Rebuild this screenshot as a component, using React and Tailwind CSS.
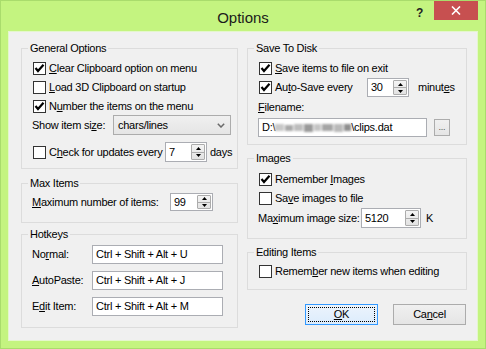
import React from "react";

function CheckBox({ checked }) {
  return (
    <span className="flex h-[13px] w-[13px] shrink-0 items-center justify-center border border-[#333333] bg-white">
      {checked && (
        <svg width="11" height="11" viewBox="0 0 11 11">
          <path d="M1.5 5 L4 8 L9.5 1.8" fill="none" stroke="#000" strokeWidth="2.2" />
        </svg>
      )}
    </span>
  );
}

function CheckRow({ checked, children, className = "" }) {
  return (
    <div className={`flex items-center pl-[11px] ${className}`}>
      <CheckBox checked={checked} />
      <span className="ml-[3px] whitespace-nowrap">{children}</span>
    </div>
  );
}

function Spin({ value, className = "" }) {
  return (
    <div className={`flex border border-[#abadb3] bg-white ${className}`}>
      <span className="flex-1 self-center pl-[3px]">{value}</span>
      <div className="m-[1px] flex w-[14px] flex-col rounded-[1px] border border-[#acacac] bg-gradient-to-b from-[#f4f4f4] to-[#e2e2e2]">
        <div className="flex flex-1 items-center justify-center border-b border-[#acacac]">
          <svg width="5" height="3" viewBox="0 0 5 3">
            <polygon points="0,3 2.5,0 5,3" fill="#000" />
          </svg>
        </div>
        <div className="flex flex-1 items-center justify-center">
          <svg width="5" height="3" viewBox="0 0 5 3">
            <polygon points="0,0 5,0 2.5,3" fill="#000" />
          </svg>
        </div>
      </div>
    </div>
  );
}

function Group({ title, className = "", children }) {
  return (
    <fieldset className={`border border-[#dcdcdc] ${className}`}>
      <legend className="ml-[6px] px-[2px] leading-[12px]">{title}</legend>
      {children}
    </fieldset>
  );
}

function TextBox({ children, className = "" }) {
  return (
    <div className={`flex items-center border border-[#abadb3] bg-white pl-[3px] whitespace-nowrap ${className}`}>
      {children}
    </div>
  );
}

export default function App() {
  return (
    <div className="h-[349px] w-[486px] overflow-hidden border border-[#a9dc6c] bg-[#c4f480] font-['Liberation_Sans',Arial,sans-serif] text-[11px] leading-[13px] tracking-[-0.25px] text-black">
      {/* title bar */}
      <div className="grid h-[30px] grid-cols-[1fr_auto_1fr]">
        <div />
        <div className="self-center pt-[2px] text-[15px] tracking-normal text-[#1b1b1b]">Options</div>
        <div className="flex items-start justify-end pr-[7px]">
          <span className="mr-[11px] mt-[6px] text-[12px] font-bold text-[#222]">?</span>
          <div className="flex h-[19px] w-[44px] items-center justify-center bg-[#c75050]">
            <svg width="10" height="9" viewBox="0 0 10 9">
              <path d="M1 0.5 L9 8.5 M9 0.5 L1 8.5" stroke="#fff" strokeWidth="1.6" />
            </svg>
          </div>
        </div>
      </div>

      {/* client area */}
      <div className="mx-[7px] flex h-[310px] gap-[9px] border border-[#e4f7cc] bg-[#f0f0f0] pl-[12px] pr-[10px] pt-[10px]">
        {/* left column */}
        <div className="flex w-[217px] flex-col">
          <Group title="General Options" className="pb-[6px]">
            <CheckRow checked className="mt-[5px] h-[19px]">
              <u>C</u>lear Clipboard option on menu
            </CheckRow>
            <CheckRow className="h-[19px]">
              <u>L</u>oad 3D Clipboard on startup
            </CheckRow>
            <CheckRow checked className="h-[18px]">
              N<u>u</u>mber the items on the menu
            </CheckRow>
            <div className="flex h-[20px] items-center pl-[10px]">
              <span className="w-[81px] whitespace-nowrap">
                Show item si<u>z</u>e:
              </span>
              <div className="flex h-[20px] w-[118px] items-center justify-between border border-[#acacac] bg-gradient-to-b from-[#f0f0f0] to-[#e5e5e5] pl-[4px] pr-[5px]">
                <span>chars/lines</span>
                <svg width="8" height="5" viewBox="0 0 8 5">
                  <path d="M0.8 0.8 L4 4 L7.2 0.8" fill="none" stroke="#6a6a6a" strokeWidth="1.5" />
                </svg>
              </div>
            </div>
            <div className="mt-[7px] flex h-[20px] items-center pl-[11px]">
              <CheckBox />
              <span className="ml-[3px] w-[116px] whitespace-nowrap">
                C<u>h</u>eck for updates every
              </span>
              <Spin value="7" className="h-[20px] w-[42px]" />
              <span className="ml-[3px]">days</span>
            </div>
          </Group>

          <Group title="Max Items" className="mt-[8px] pb-[11px]">
            <div className="mt-[4px] flex h-[18px] items-center pl-[10px]">
              <span className="w-[138px] whitespace-nowrap">
                <u>M</u>aximum number of items:
              </span>
              <Spin value="99" className="h-[18px] w-[43px]" />
            </div>
          </Group>

          <Group title="Hotkeys" className="mt-[5px] pb-[11px]">
            <div className="mt-[5px] flex flex-col gap-[7px] pl-[10px]">
              <div className="flex items-center">
                <span className="w-[60px]">
                  No<u>r</u>mal:
                </span>
                <TextBox className="h-[19px] w-[131px]">Ctrl + Shift + Alt + U</TextBox>
              </div>
              <div className="flex items-center">
                <span className="w-[60px]">
                  <u>A</u>utoPaste:
                </span>
                <TextBox className="h-[19px] w-[131px]">Ctrl + Shift + Alt + J</TextBox>
              </div>
              <div className="flex items-center">
                <span className="w-[60px]">
                  E<u>d</u>it Item:
                </span>
                <TextBox className="h-[19px] w-[131px]">Ctrl + Shift + Alt + M</TextBox>
              </div>
            </div>
          </Group>
        </div>

        {/* right column */}
        <div className="flex w-[220px] flex-col">
          <Group title="Save To Disk" className="pb-[7px]">
            <CheckRow checked className="mt-[5px] h-[19px]">
              <u>S</u>ave items to file on exit
            </CheckRow>
            <div className="flex h-[19px] items-center pl-[11px]">
              <CheckBox checked />
              <span className="ml-[3px] w-[92px] whitespace-nowrap">
                Au<u>t</u>o-Save every
              </span>
              <Spin value="30" className="h-[19px] w-[42px]" />
              <span className="ml-[9px]">
                minut<u>e</u>s
              </span>
            </div>
            <div className="mt-[3px] flex h-[14px] items-center pl-[10px]">
              <span>
                <u>F</u>ilename:
              </span>
            </div>
            <div className="mt-[4px] flex items-center pl-[10px]">
              <TextBox className="h-[19px] w-[169px]">
                <span>D:\</span>
                <span className="flex h-[9px] w-[76px] items-center gap-[1px] blur-[1px]">
                  <span className="h-[7px] w-[9px] bg-[#c8c8c8]" />
                  <span className="h-[6px] w-[8px] bg-[#a9a9a9]" />
                  <span className="h-[7px] w-[10px] bg-[#bdbdbd]" />
                  <span className="h-[8px] w-[9px] bg-[#9a9a9a]" />
                  <span className="h-[7px] w-[8px] bg-[#c4c4c4]" />
                  <span className="h-[7px] w-[11px] bg-[#a5a5a5]" />
                  <span className="h-[8px] w-[9px] bg-[#b9b9b9]" />
                  <span className="h-[7px] w-[8px] bg-[#8f8f8f]" />
                </span>
                <span>\clips.dat</span>
              </TextBox>
              <div className="ml-[7px] flex h-[17px] w-[16px] items-end justify-center border border-[#acacac] bg-gradient-to-b from-[#f0f0f0] to-[#e5e5e5] pb-[3px] text-[9px] leading-none text-[#555]">
                ...
              </div>
            </div>
          </Group>

          <Group title="Images" className="mt-[7px] pb-[10px]">
            <CheckRow checked className="mt-[6px] h-[19px]">
              Remember <u>I</u>mages
            </CheckRow>
            <CheckRow className="h-[19px]">
              Sa<u>v</u>e images to file
            </CheckRow>
            <div className="flex h-[20px] items-center pl-[10px]">
              <span className="w-[103px] whitespace-nowrap">
                Ma<u>x</u>imum image size:
              </span>
              <Spin value="5120" className="h-[20px] w-[60px]" />
              <span className="ml-[5px]">K</span>
            </div>
          </Group>

          <Group title="Editing Items" className="mt-[7px] pb-[8px]">
            <CheckRow className="mt-[4px] h-[19px]">
              Remem<u>b</u>er new items when editing
            </CheckRow>
          </Group>

          <div className="mt-[14px] flex justify-end gap-[15px] pr-[1px]">
            <div className="flex h-[21px] w-[73px] items-center justify-center border border-[#3399ff] bg-gradient-to-b from-[#ecf4fc] to-[#dcecfc] p-[2px]">
              <div className="flex h-full w-full items-center justify-center border border-dotted border-black">
                <span>
                  <u>O</u>K
                </span>
              </div>
            </div>
            <div className="flex h-[21px] w-[73px] items-center justify-center border border-[#acacac] bg-gradient-to-b from-[#f0f0f0] to-[#e5e5e5]">
              <span>
                Ca<u>n</u>cel
              </span>
            </div>
          </div>
        </div>
      </div>
    </div>
  );
}
